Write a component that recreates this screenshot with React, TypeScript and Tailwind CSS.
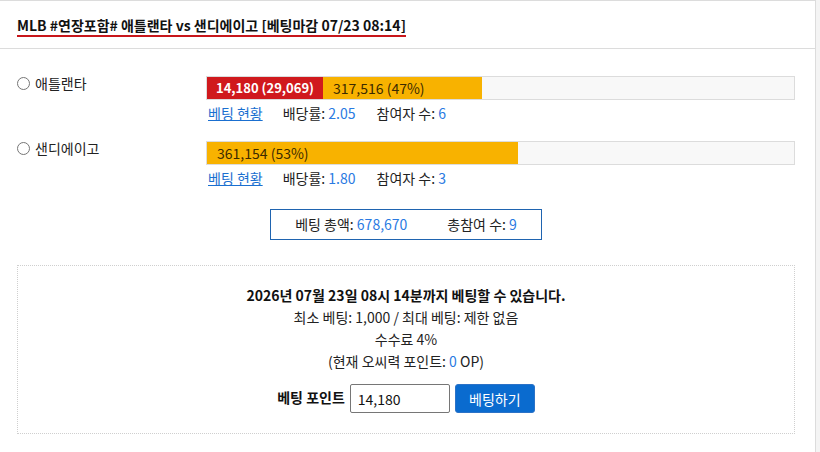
const font = { fontFamily: '"Noto Sans CJK KR", "Noto Sans", sans-serif' };

type Team = {
  name: string;
  mine?: string;
  mineWidth?: number;
  total: string;
  totalWidth: number;
  odds: string;
  players: number;
};

const teams: Team[] = [
  { name: "애틀랜타", mine: "14,180 (29,069)", mineWidth: 116, total: "317,516 (47%)", totalWidth: 159, odds: "2.05", players: 6 },
  { name: "샌디에이고", total: "361,154 (53%)", totalWidth: 311, odds: "1.80", players: 3 },
];

const TeamRow = ({ team }: { team: Team }) => (
  <div className="flex">
    <label className="flex w-[189px] shrink-0 items-start gap-[5px] pt-[1px] text-[14px] leading-[15px] text-[#222]">
      <span className="inline-block h-[13px] w-[13px] shrink-0 rounded-full border border-[#767676] bg-white" />
      <span className="-mt-[1px]">{team.name}</span>
    </label>
    <div className="flex-1">
      <div className="flex h-[24px] border border-[#dcdcdc] bg-[#f8f8f8] text-[14px] leading-[22px]">
        {team.mine && (
          <div
            className="overflow-hidden whitespace-nowrap bg-[#d0191d] text-center text-[13px] font-bold text-white"
            style={{ width: team.mineWidth }}
          >
            {team.mine}
          </div>
        )}
        <div
          className="whitespace-nowrap bg-[#f8b200] px-[10px] text-[#3b2a00]"
          style={{ width: team.totalWidth }}
        >
          {team.total}
        </div>
      </div>
      <div className="mt-[3px] flex h-[20px] items-center pl-[2px] text-[14px] text-[#222]">
        <a className="mr-[20px] text-[#1a6fd0] underline" href="#">
          베팅 현황
        </a>
        <span className="mr-[21px]">
          배당률: <span className="text-[#2a7ae2]">{team.odds}</span>
        </span>
        <span>
          참여자 수: <span className="text-[#2a7ae2]">{team.players}</span>
        </span>
      </div>
    </div>
  </div>
);

export default function App() {
  return (
    <div className="min-h-[452px] w-full bg-[#f4f4f4]" style={font}>
      <div className="min-h-[452px] w-[816px] border-r border-t border-[#dcdcdc] bg-white">
        <div className="h-[48px] border-b border-[#dcdcdc] px-[17px] pt-[15px]">
          <div className="w-fit border-b-2 border-[#c8161b] text-[14px] font-bold leading-[19px] text-[#111]">
            MLB #연장포함# 애틀랜타 vs 샌디에이고 [베팅마감 07/23 08:14]
          </div>
        </div>

        <div className="px-[20px] pl-[17px]">
          <div className="mt-[27px] flex flex-col gap-[18px]">
            {teams.map((t) => (
              <TeamRow key={t.name} team={t} />
            ))}
          </div>

          <div className="mt-[21px] flex justify-center">
            <div className="flex h-[31px] w-[272px] items-center justify-center gap-[40px] border border-[#1f64b0] text-[14px] text-[#222]">
              <span>
                베팅 총액: <span className="text-[#2a7ae2]">678,670</span>
              </span>
              <span>
                총참여 수: <span className="text-[#2a7ae2]">9</span>
              </span>
            </div>
          </div>

          <div className="mt-[25px] border border-dotted border-[#cfcfcf] pb-[20px] pt-[18px] text-center text-[14px] leading-[22px] text-[#222]">
            <p className="font-bold text-[#111]">2026년 07월 23일 08시 14분까지 베팅할 수 있습니다.</p>
            <p>최소 베팅: 1,000 / 최대 베팅: 제한 없음</p>
            <p>수수료 4%</p>
            <p>
              (현재 오씨력 포인트: <span className="text-[#2a7ae2]">0</span> OP)
            </p>
            <div className="mt-[12px] flex items-center justify-center gap-[5px]">
              <span className="-mt-[4px] font-bold text-[#111]">베팅 포인트</span>
              <input
                className="h-[29px] w-[100px] rounded-[2px] border border-[#767676] px-[7px] text-[14px] text-[#111] outline-none"
                defaultValue="14,180"
              />
              <button className="h-[29px] w-[80px] rounded-[3px] border border-[#2b72c7] bg-[#0a6bcf] text-[14px] text-white">
                베팅하기
              </button>
            </div>
          </div>
        </div>
      </div>
    </div>
  );
}
